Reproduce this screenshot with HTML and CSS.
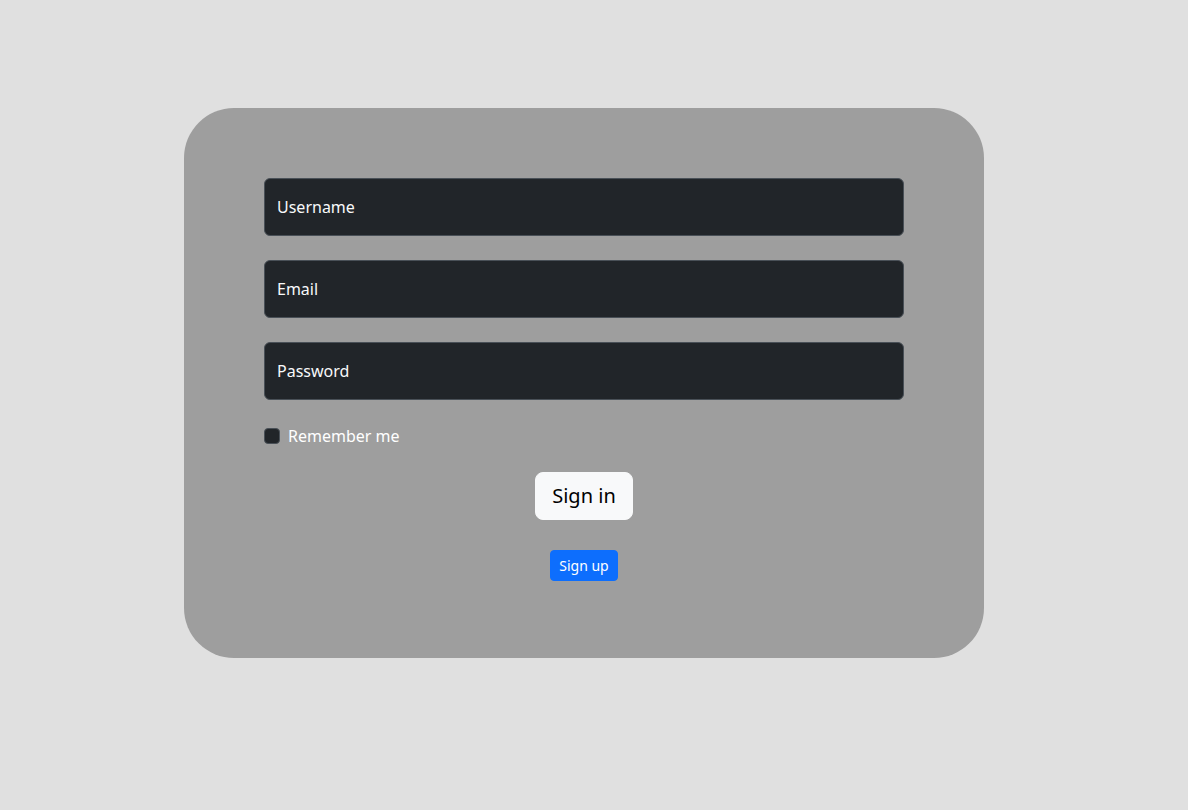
FILE: index.html
```html
<!DOCTYPE html>
<html lang="en">
<head>
<meta charset="utf-8">
<title>Sign in</title>
<link rel="stylesheet" href="styles.css">
</head>
<body>
<main class="page">
  <form class="card">
    <div class="field"><input class="input" type="text" placeholder="Username"></div>
    <div class="field"><input class="input" type="email" placeholder="Email"></div>
    <div class="field"><input class="input" type="password" placeholder="Password"></div>
    <label class="check"><span class="box"></span><span class="check-label">Remember me</span></label>
    <div class="actions">
      <button type="button" class="btn btn-light">Sign in</button>
      <button type="button" class="btn btn-blue">Sign up</button>
    </div>
  </form>
</main>
</body>
</html>
```
FILE: styles.css
```css
* { box-sizing: border-box; }
html, body {
  margin: 0;
  padding: 0;
  background: #e0e0e0;
  font-family: "Noto Sans", "Liberation Sans", sans-serif;
  color: #fff;
}
.page {
  padding: 108px 0 0 184px;
  min-height: 810px;
}
.card {
  width: 800px;
  height: 550px;
  background: #9e9e9e;
  border-radius: 50px;
  padding: 70px 80px 0 80px;
  display: flex;
  flex-direction: column;
}
.field { margin-bottom: 24px; }
.input {
  display: block;
  width: 640px;
  height: 58px;
  background: #212529;
  border: 1px solid #495057;
  border-radius: 6px;
  padding: 0 12px;
  font-family: inherit;
  font-size: 16px;
  color: #fff;
  outline: none;
}
.input::placeholder { color: #f8f9fa; opacity: 1; }
.check {
  display: flex;
  align-items: center;
  height: 24px;
  font-size: 16px;
  line-height: 24px;
  color: #fff;
}
.box {
  width: 16px;
  height: 16px;
  background: #212529;
  border: 1px solid #495057;
  border-radius: 4px;
  margin-right: 8px;
}
.actions {
  display: flex;
  flex-direction: column;
  align-items: center;
  margin-top: 24px;
}
.btn {
  font-family: inherit;
  border: 1px solid transparent;
  cursor: pointer;
}
.btn-light {
  background: #f8f9fa;
  border-color: #f8f9fa;
  color: #000;
  font-size: 20px;
  line-height: 30px;
  padding: 8px 16px;
  border-radius: 8px;
  height: 48px;
}
.btn-blue {
  margin-top: 30px;
  background: #0d6efd;
  border-color: #0d6efd;
  color: #fff;
  font-size: 14px;
  line-height: 21px;
  padding: 4px 8px;
  border-radius: 4px;
  height: 31px;
}
```
